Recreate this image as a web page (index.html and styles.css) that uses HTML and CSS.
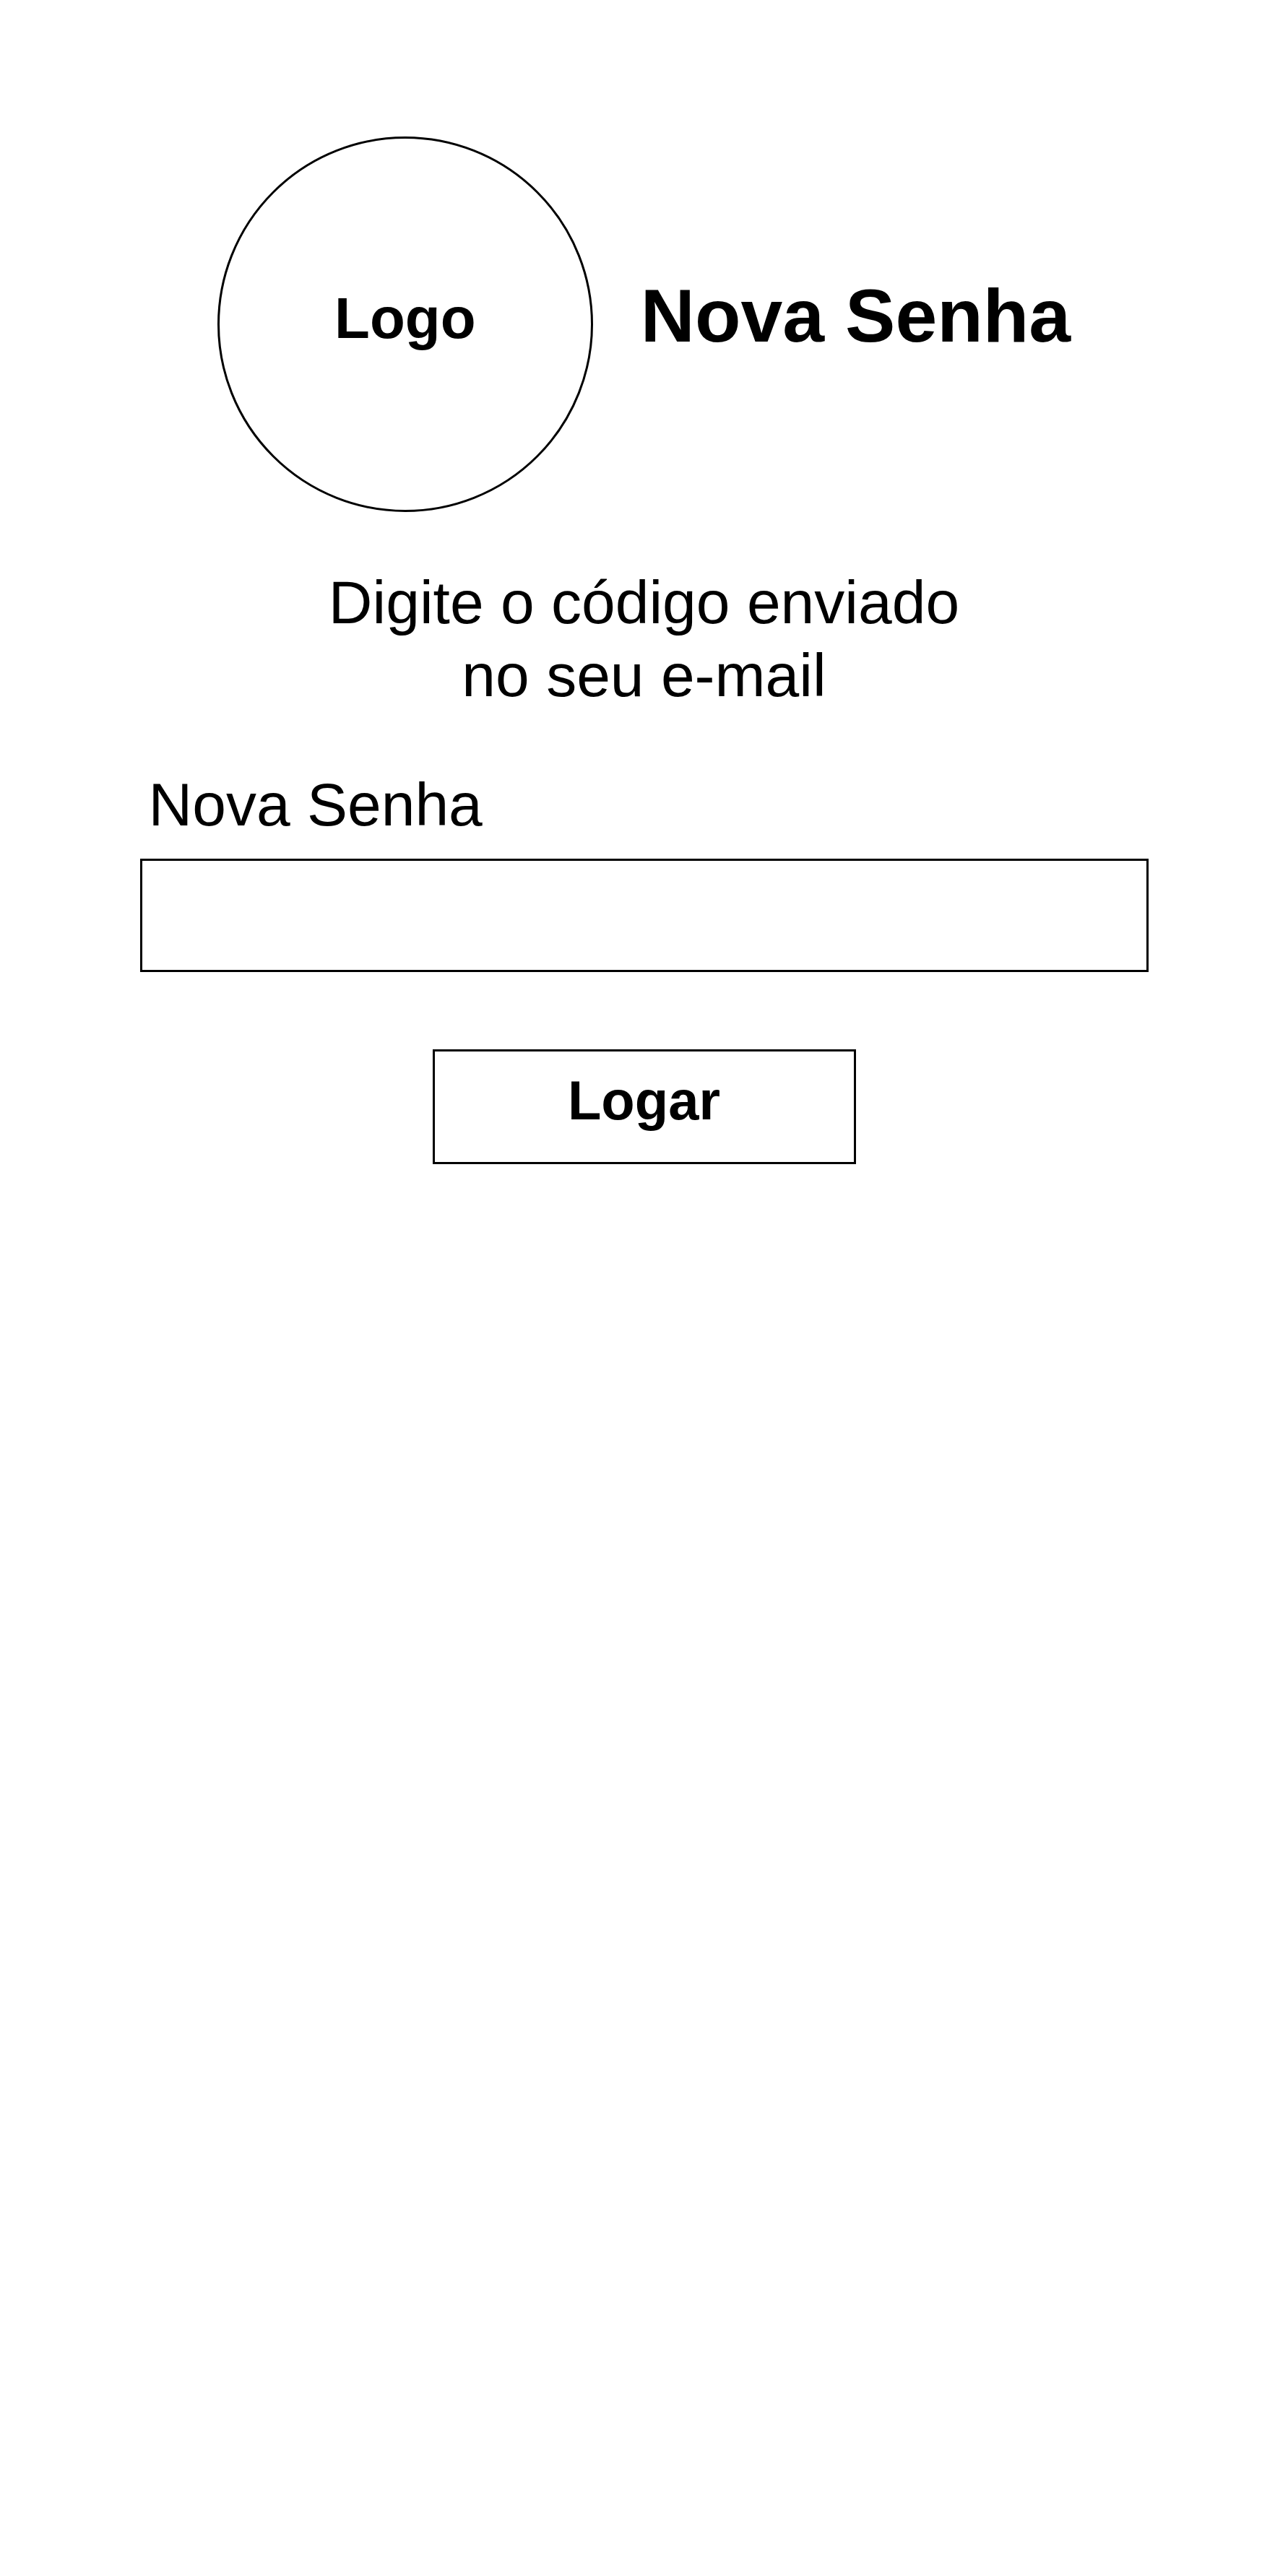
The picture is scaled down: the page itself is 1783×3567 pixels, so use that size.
FILE: index.html
```html
<!DOCTYPE html>
<html lang="pt-BR">
<head>
<meta charset="utf-8">
<title>Nova Senha</title>
<link rel="stylesheet" href="styles.css">
</head>
<body>
<main class="page">
  <header class="brand">
    <div class="logo"><span class="logo-text">Logo</span></div>
    <h1 class="title">Nova Senha</h1>
  </header>
  <p class="instructions">Digite o código enviado<br>no seu e-mail</p>
  <form class="form">
    <label class="field-label" for="nova-senha">Nova Senha</label>
    <input class="field-input" id="nova-senha" type="password">
    <button class="btn" type="submit">Logar</button>
  </form>
</main>
</body>
</html>
```

FILE: styles.css
```css
html, body {
  margin: 0;
  padding: 0;
  background: #fff;
}

body {
  font-family: "Liberation Sans", Arial, sans-serif;
  color: #000;
}

.page {
  display: flex;
  flex-direction: column;
  align-items: center;
  padding-top: 189px;
}

.brand {
  display: flex;
  align-items: center;
  gap: 66px;
}

.logo {
  width: 520px;
  height: 520px;
  box-sizing: border-box;
  border: 3px solid #000;
  border-radius: 50%;
  display: flex;
  align-items: center;
  justify-content: center;
  padding-bottom: 17px;
}

.logo-text {
  font-weight: 700;
  font-size: 80px;
  line-height: 1;
}

.title {
  margin: 0;
  font-size: 104px;
  font-weight: 700;
  line-height: 1;
  padding-bottom: 24px;
}

.instructions {
  margin: 75px 0 0;
  font-size: 84px;
  line-height: 101px;
  text-align: center;
}

.form {
  display: flex;
  flex-direction: column;
  align-items: center;
  width: 1396px;
  margin-top: 78px;
}

.field-label {
  align-self: stretch;
  padding-left: 12px;
  font-size: 84px;
  line-height: 101px;
}

.field-input {
  display: block;
  margin: 24px 0 0;
  width: 1396px;
  height: 157px;
  box-sizing: border-box;
  border: 3px solid #000;
  border-radius: 0;
  background: #fff;
  outline: none;
  padding: 0 20px;
  font-family: inherit;
  font-size: 60px;
}

.btn {
  display: flex;
  align-items: center;
  justify-content: center;
  margin-top: 107px;
  width: 586px;
  height: 159px;
  box-sizing: border-box;
  border: 3px solid #000;
  border-radius: 0;
  background: #fff;
  color: #000;
  padding: 0 0 18px;
  font-family: inherit;
  font-weight: 700;
  font-size: 76px;
  line-height: 1;
  cursor: pointer;
}
```
